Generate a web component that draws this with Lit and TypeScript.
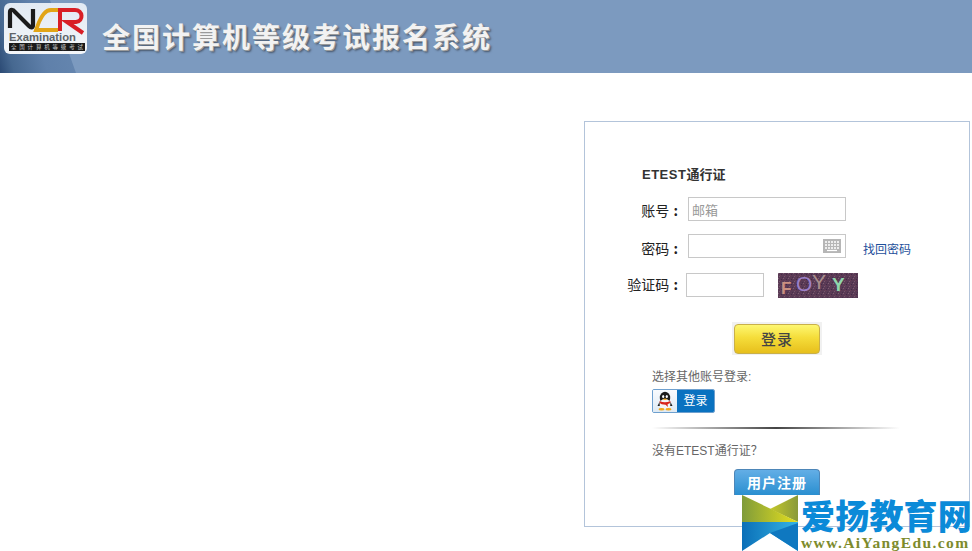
import { LitElement, html, css } from "lit";
import { customElement } from "lit/decorators.js";

@customElement("app-root")
export class AppRoot extends LitElement {
  static styles = css`
    :host { display: block; height: 551px; position: relative; overflow: hidden; background: #fff;
      font-family: "Liberation Sans", "Noto Sans CJK SC", sans-serif; font-size: 13px; color: #222; }
    * { box-sizing: border-box; }
    .header { height: 73px; background: #7c9abf; display: flex; align-items: flex-start; position: relative; overflow: hidden; }
    .header::before { content: ""; position: absolute; left: 0; top: 0; width: 100px; height: 73px;
      background: linear-gradient(75deg, #2b4a74 0%, #466890 12%, #5f80aa 40%, #6b8cb4 100%);
      clip-path: polygon(0 0, 50px 0, 76px 73px, 0 73px); }
    .logo { position: relative; margin: 3px 0 0 4px; width: 83px; height: 51px; flex: none; display: block; }
    .title { position: relative; margin: 18px 0 0 15px; font-size: 28px; line-height: 36px; font-weight: 700;
      font-family: "Noto Sans CJK SC", sans-serif;
      letter-spacing: 2px; color: #f2f2f2; white-space: nowrap;
      text-shadow: 1px 1px 0 #9a9a9a, 2px 2px 2px #48576b; }
    .main { display: flex; justify-content: flex-end; padding: 48px 2px 0 0; }
    .panel { width: 386px; height: 406px; border: 1px solid #b3c4da; padding-top: 44px; }
    .heading { margin-left: 57px; height: 18px; line-height: 18px; font-weight: 700; color: #333; }
    .heading b { letter-spacing: 0.5px; }
    .row { display: flex; align-items: center; height: 24px; margin-top: 13px; }
    .row.third { margin-top: 15px; }
    .label { width: 98px; padding-right: 5px; text-align: right; font-size: 14px; color: #222; flex: none; line-height: 27px; height: 24px; white-space: nowrap;
      font-family: "Noto Sans CJK SC", sans-serif; word-spacing: 1px; }
    .label b { font-weight: 700; }
    .row.second .label { line-height: 29px; }
    .row.third .label { line-height: 22px; }
    .field { width: 158px; height: 24px; border: 1px solid #c8c8c8; margin-left: 5px; display: flex; align-items: center;
      justify-content: flex-end; padding: 0 4px 0 3px; background: #fff; }
    .field input { border: 0; outline: 0; width: 100%; min-width: 0; padding: 1px 0 0; background: transparent; font: inherit; color: #222; font-family: "Noto Sans CJK SC", sans-serif; }
    .field input::placeholder { color: #999; opacity: 1; }
    .kbd { flex: none; width: 18px; height: 14px; display: block; }
    .link { color: #1e4f9b; margin-left: 17px; font-size: 12px; white-space: nowrap; position: relative; top: 2px; }
    .code { width: 78px; margin-left: 3px; padding: 0 3px; }
    .captcha { width: 80px; height: 25px; margin-left: 14px; flex: none; display: block; overflow: visible; }
    .login-wrap { display: flex; justify-content: center; margin-top: 25px; }
    .login-glow { width: 90px; height: 33px; padding: 2px; background: #f1f1f1; }
    .login { width: 86px; height: 30px; border: 1px solid #c9b04a; border-radius: 4px;
      background: linear-gradient(#fdf771 0%, #f5dd3a 45%, #e7bf1c 100%);
      font-size: 15px; font-weight: 500; color: #444; line-height: 28px; text-align: center; letter-spacing: 1px;
      font-family: "Noto Sans CJK SC", sans-serif; }
    .other { margin: 13px 0 0 67px; font-size: 12px; line-height: 18px; height: 18px; color: #666; }
    .qq { margin: 3px 0 0 67px; width: 63px; height: 24px; display: flex; border: 1px solid #6ea0cf; border-radius: 2px; overflow: hidden; }
    .qq-ico { width: 24px; flex: none; background: linear-gradient(#f8fbfe, #dfeaf4); display: flex; align-items: center; justify-content: center; }
    .qq-ico svg { display: block; }
    .qq-txt { flex: 1; background: #0a72c0; color: #fff; font-size: 12px; line-height: 22px; text-align: center; }
    .divider { margin: 14px 0 0 67px; width: 248px; height: 2px;
      background: linear-gradient(90deg, #ffffff 0%, #444 50%, #ffffff 100%); }
    .noacct { margin-top: 13px; margin-left: 67px; font-size: 12px; line-height: 18px; height: 18px; color: #666; }
    .reg-wrap { display: flex; justify-content: center; margin-top: 9px; }
    .reg { width: 86px; height: 26px; border: 1px solid #4d86b8; border-bottom: 0; border-radius: 4px 4px 0 0;
      background: linear-gradient(#63aee6, #2a8fd0); color: #fff; font-weight: 700; font-size: 14px;
      line-height: 26px; text-align: center; letter-spacing: 1px; }
    .wm { position: absolute; left: 742px; top: 495px; width: 230px; height: 56px; display: flex; }
    .wm svg { display: block; flex: none; }
    .wm-text { margin-left: 3px; width: 171px; }
    .wm-cn { font-family: "Noto Sans CJK SC", sans-serif; font-size: 34px; line-height: 38px; height: 38px; margin-top: 1px; font-weight: 900; color: #0b8ad8; letter-spacing: 0.2px; white-space: nowrap; }
    .wm-en { font-family: "Liberation Serif", serif; font-weight: 700; font-size: 15.5px; line-height: 14px; color: #7d8b2c; letter-spacing: 1.4px; white-space: nowrap; margin-top: 2px; }
  `;

  render() {
    return html`
      <div class="header">
        <svg class="logo" viewBox="0 0 83 51">
          <defs>
            <linearGradient id="lg" x1="0" y1="0" x2="0" y2="1"><stop offset="0" stop-color="#e2eaf3"/><stop offset="1" stop-color="#f3f6f9"/></linearGradient>
          </defs>
          <rect width="83" height="51" rx="6" fill="url(#lg)"/>
          <path d="M6 25 V9 C6 6 9 6 11 9 L25 23 C27 25 29 25 29 22 V6" fill="none" stroke="#1b1b1b" stroke-width="4.2"/>
          <path d="M54 7 H47 C41 7 38 13 35 19 L32 27 H54" fill="none" stroke="#e2a516" stroke-width="3.8"/>
          <path d="M56 28 V7 H71 C79 7 80 18 72 19 H63 L79 30" fill="none" stroke="#d81f26" stroke-width="4"/>
          <text x="5" y="38" font-family="Liberation Sans, sans-serif" font-weight="700" font-size="10.8" fill="#5e6468" textLength="67" lengthAdjust="spacingAndGlyphs">Examination</text>
          <rect x="5" y="40" width="76" height="8" fill="#1a1a1a"/>
          <text x="7" y="46.4" font-family="Noto Sans CJK SC, sans-serif" font-size="5.5" fill="#c8c8c8" textLength="72">全国计算机等级考试</text>
        </svg>
        <div class="title">全国计算机等级考试报名系统</div>
      </div>
      <div class="main">
        <div class="panel">
          <div class="heading"><b>ETEST</b>通行证</div>
          <div class="row">
            <div class="label">账号 <b>:</b></div>
            <div class="field"><input placeholder="邮箱" /></div>
          </div>
          <div class="row second">
            <div class="label">密码 <b>:</b></div>
            <div class="field">
              <input type="password" />
              <svg class="kbd" viewBox="0 0 18 14">
                <rect width="18" height="14" fill="#b6b6b6"/>
                <path d="M2 3h14M2 6h14M2 9h14" stroke="#fff" stroke-width="1.6" stroke-dasharray="2 1" fill="none"/>
                <path d="M4 11.5h10" stroke="#fff" stroke-width="1.2"/>
              </svg>
            </div>
            <span class="link">找回密码</span>
          </div>
          <div class="row third">
            <div class="label">验证码 <b>:</b></div>
            <div class="field code"><input /></div>
            <svg class="captcha" viewBox="0 0 80 25">
              <defs>
                <pattern id="noise" width="5" height="5" patternUnits="userSpaceOnUse">
                  <rect width="5" height="5" fill="#5a3a55"/>
                  <rect x="0" y="0" width="1" height="1" fill="#7d5f73"/>
                  <rect x="3" y="1" width="1" height="1" fill="#3f2a47"/>
                  <rect x="1" y="3" width="1" height="1" fill="#765a6e"/>
                  <rect x="4" y="4" width="1" height="1" fill="#46304c"/>
                  <rect x="2" y="2" width="1" height="1" fill="#6b3f55"/>
                </pattern>
              </defs>
              <rect width="80" height="25" fill="url(#noise)"/>
              <text x="3" y="21" font-family="Liberation Sans, sans-serif" font-weight="700" font-size="17" fill="#c98f80">F</text>
              <text x="18" y="18" font-family="Liberation Sans, sans-serif" font-size="21" fill="#9c80c8">O</text>
              <text x="34" y="16" font-family="Liberation Sans, sans-serif" font-size="21" fill="#a98e8c">Y</text>
              <text x="54" y="18" font-family="Liberation Sans, sans-serif" font-weight="700" font-size="19" fill="#8fd6ac">Y</text>
            </svg>
          </div>
          <div class="login-wrap"><div class="login-glow"><div class="login">登录</div></div></div>
          <div class="other">选择其他账号登录:</div>
          <div class="qq">
            <div class="qq-ico">
              <svg width="18" height="20" viewBox="0 0 18 20">
                <ellipse cx="9" cy="7" rx="5.2" ry="6.2" fill="#1c1c1c"/>
                <ellipse cx="9" cy="13" rx="5.6" ry="5" fill="#f5f5f5"/>
                <ellipse cx="7.2" cy="5.5" rx="1.1" ry="1.5" fill="#fff"/>
                <ellipse cx="10.8" cy="5.5" rx="1.1" ry="1.5" fill="#fff"/>
                <path d="M6.5 8 Q9 6.8 11.5 8 Q9 10 6.5 8Z" fill="#f3a81c"/>
                <path d="M3.6 10 Q9 12.5 14.4 10 L14.4 12 Q12 13 11.5 13.4 L12 16 L9.5 13.8 Q5 13.5 3.6 12Z" fill="#d9261c"/>
                <path d="M3.5 11 L1.5 15 L3.8 15Z M14.5 11 L16.5 15 L14.2 15Z" fill="#1c1c1c"/>
                <ellipse cx="5.5" cy="18.2" rx="3" ry="1.2" fill="#f3a81c"/>
                <ellipse cx="12.5" cy="18.2" rx="3" ry="1.2" fill="#f3a81c"/>
              </svg>
            </div>
            <div class="qq-txt">登录</div>
          </div>
          <div class="divider"></div>
          <div class="noacct">没有ETEST通行证？</div>
          <div class="reg-wrap"><div class="reg">用户注册</div></div>
        </div>
      </div>
      <div class="wm">
        <svg width="56" height="56" viewBox="0 0 56 56">
          <defs>
            <linearGradient id="w1" x1="0" y1="0" x2="1" y2="0"><stop offset="0" stop-color="#7f9b3a"/><stop offset="1" stop-color="#e6e01e"/></linearGradient>
            <linearGradient id="w2" x1="0" y1="0" x2="1" y2="0"><stop offset="0" stop-color="#c4c82a"/><stop offset="1" stop-color="#8a9a3a"/></linearGradient>
            <linearGradient id="w3" x1="0" y1="0" x2="1" y2="0"><stop offset="0" stop-color="#0a6fb8"/><stop offset="1" stop-color="#35b4e4"/></linearGradient>
          </defs>
          <path d="M56 0 L28 14 L56 27Z" fill="url(#w2)"/>
          <path d="M0 0 L56 27 H0Z" fill="url(#w1)"/>
          <path d="M0 27 H56 V56 L28 38 L0 56Z" fill="url(#w3)"/>
          <path d="M56 28 V56 L28 38Z" fill="#0f78c0"/>
        </svg>
        <div class="wm-text">
          <div class="wm-cn">爱扬教育网</div>
          <div class="wm-en">www.AiYangEdu.com</div>
        </div>
      </div>
    `;
  }
}
